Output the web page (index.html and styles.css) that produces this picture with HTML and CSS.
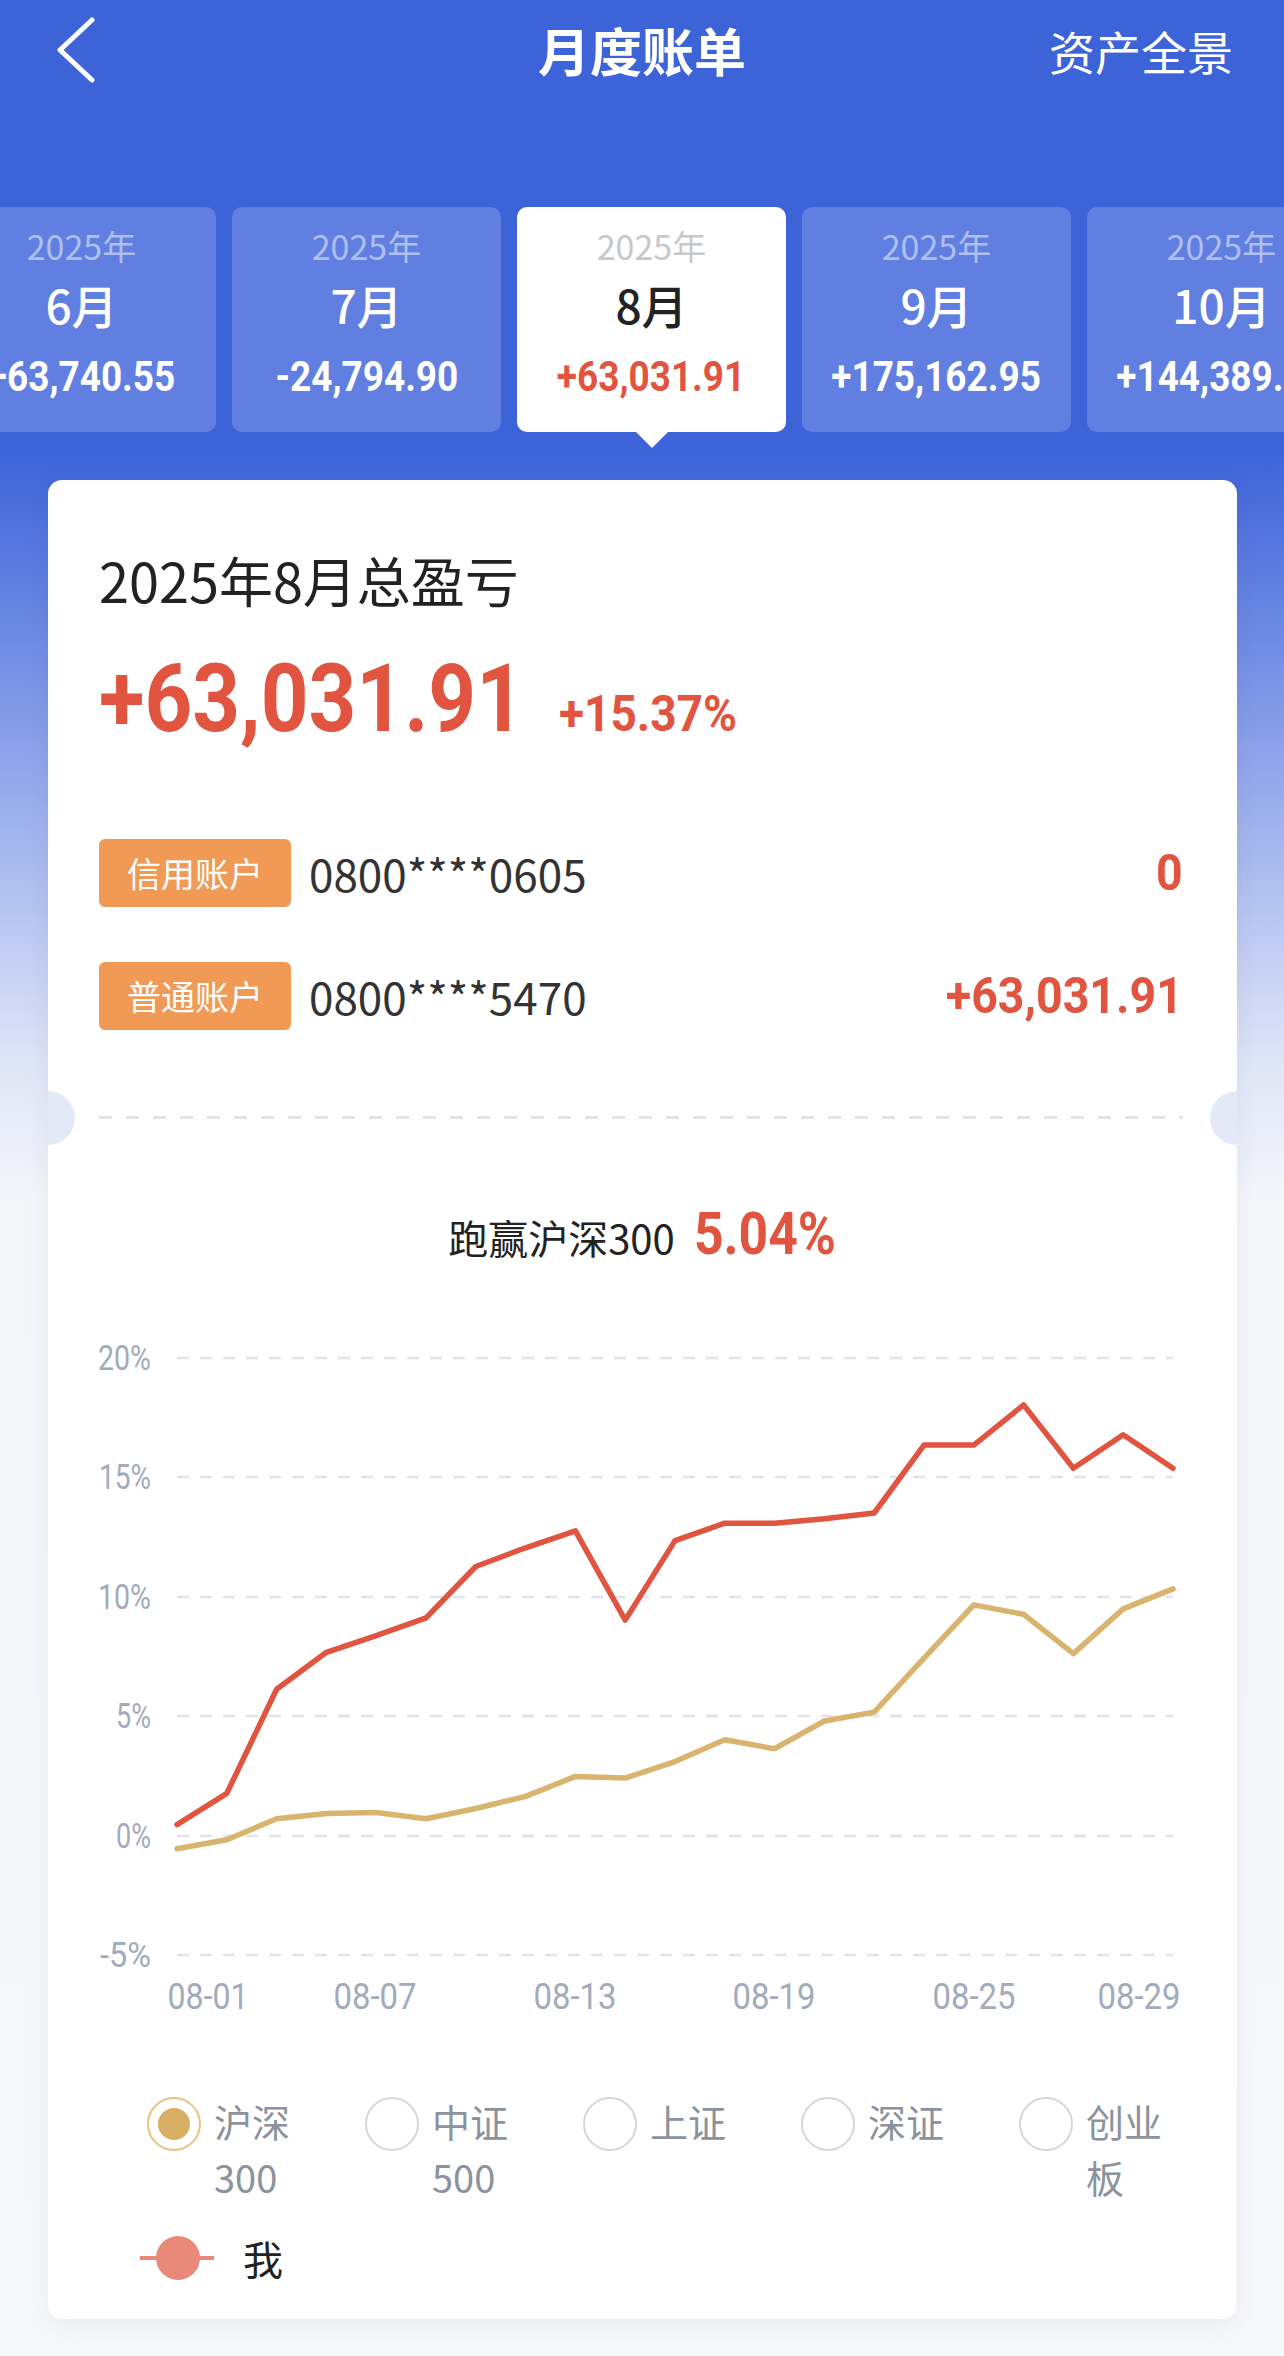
FILE: index.html
```html
<!DOCTYPE html>
<html lang="zh-CN">
<head>
<meta charset="utf-8">
<title>月度账单</title>
<link rel="stylesheet" href="styles.css">
</head>
<body>
<div class="page">
  <header class="topbar">
    <div class="tb-left">
      <svg class="back" width="42" height="66" viewBox="0 0 42 66"><path d="M37 3 L5 33 L37 63" fill="none" stroke="#fff" stroke-width="5" stroke-linecap="round" stroke-linejoin="round"/></svg>
    </div>
    <div class="tb-title">月度账单</div>
    <div class="tb-right">资产全景</div>
  </header>

  <div class="months">
    <div class="month"><div class="m-year">2025年</div><div class="m-name">6月</div><div class="m-amt"><span class="cond">+63,740.55</span></div></div>
    <div class="month"><div class="m-year">2025年</div><div class="m-name">7月</div><div class="m-amt"><span class="cond">-24,794.90</span></div></div>
    <div class="month active"><div class="m-year">2025年</div><div class="m-name">8月</div><div class="m-amt"><span class="cond">+63,031.91</span></div></div>
    <div class="month"><div class="m-year">2025年</div><div class="m-name">9月</div><div class="m-amt"><span class="cond">+175,162.95</span></div></div>
    <div class="month"><div class="m-year">2025年</div><div class="m-name">10月</div><div class="m-amt"><span class="cond">+144,389.12</span></div></div>
  </div>

  <section class="card">
    <div class="summary">
      <div class="s-title">2025年8月总盈亏</div>
      <div class="s-total"><span class="big">+63,031.91</span><span class="pct">+15.37%</span></div>
      <div class="acct first">
        <span class="badge">信用账户</span>
        <span class="acct-no">0800****0605</span>
        <span class="acct-val">0</span>
      </div>
      <div class="acct">
        <span class="badge">普通账户</span>
        <span class="acct-no">0800****5470</span>
        <span class="acct-val">+63,031.91</span>
      </div>
    </div>

    <div class="sep"><div class="dash"></div></div>

    <div class="vs"><span class="vs-label">跑赢沪深300</span><span class="vs-val">5.04%</span></div>

    <svg class="chart" width="1189" height="700" viewBox="48 1330 1189 700">
      <g class="grid" stroke="#e2e4ea" stroke-width="2.5" stroke-dasharray="12 11">
        <line x1="177" y1="1357" x2="1173" y2="1357"/>
        <line x1="177" y1="1476" x2="1173" y2="1476"/>
        <line x1="177" y1="1596" x2="1173" y2="1596"/>
        <line x1="177" y1="1715" x2="1173" y2="1715"/>
        <line x1="177" y1="1835" x2="1173" y2="1835"/>
        <line x1="177" y1="1954" x2="1173" y2="1954"/>
      </g>
      <g class="ylab" text-anchor="end">
        <text x="151" y="1369" textLength="53" lengthAdjust="spacingAndGlyphs">20%</text>
        <text x="151" y="1488" textLength="52" lengthAdjust="spacingAndGlyphs">15%</text>
        <text x="151" y="1608" textLength="53" lengthAdjust="spacingAndGlyphs">10%</text>
        <text x="151" y="1727" textLength="35" lengthAdjust="spacingAndGlyphs">5%</text>
        <text x="151" y="1847" textLength="35" lengthAdjust="spacingAndGlyphs">0%</text>
        <text x="151" y="1966" textLength="51" lengthAdjust="spacingAndGlyphs">-5%</text>
      </g>
      <g class="xlab" text-anchor="middle">
        <text x="208" y="2008" textLength="81" lengthAdjust="spacingAndGlyphs">08-01</text>
        <text x="375" y="2008" textLength="83" lengthAdjust="spacingAndGlyphs">08-07</text>
        <text x="575" y="2008" textLength="83" lengthAdjust="spacingAndGlyphs">08-13</text>
        <text x="774" y="2008" textLength="83" lengthAdjust="spacingAndGlyphs">08-19</text>
        <text x="974" y="2008" textLength="83" lengthAdjust="spacingAndGlyphs">08-25</text>
        <text x="1139" y="2008" textLength="83" lengthAdjust="spacingAndGlyphs">08-29</text>
      </g>
      <polyline fill="none" stroke="#d9b46e" stroke-width="5.5" stroke-linejoin="round" stroke-linecap="round"
        points="177,1847.7 226.8,1838.8 276.6,1817.8 326.4,1812.4 376.2,1811.5 426,1817.8 475.8,1807.5 525.6,1795.4 575.4,1775.4 625.2,1777.1 675,1760.6 724.8,1738.8 774.6,1747.7 824.4,1720 874.2,1711.1 924,1657.1 973.8,1603.9 1023.6,1613.3 1073.4,1652.6 1123.2,1607.9 1173,1587.9"/>
      <polyline fill="none" stroke="#e05440" stroke-width="5.5" stroke-linejoin="round" stroke-linecap="round"
        points="177,1823.6 226.8,1792.3 276.6,1688.3 326.4,1651.3 376.2,1634.7 426,1616.9 475.8,1565.5 525.6,1546.8 575.4,1529.8 625.2,1619.1 675,1539.6 724.8,1522.2 774.6,1522.2 824.4,1517.8 874.2,1512 924,1444.1 973.8,1444.1 1023.6,1403.9 1073.4,1467.3 1123.2,1433.8 1173,1467.3"/>
    </svg>

    <div class="legend">
      <div class="lg-item"><span class="radio on"></span><span class="lg-text">沪深<br>300</span></div>
      <div class="lg-item"><span class="radio"></span><span class="lg-text">中证<br>500</span></div>
      <div class="lg-item"><span class="radio"></span><span class="lg-text">上证</span></div>
      <div class="lg-item"><span class="radio"></span><span class="lg-text">深证</span></div>
      <div class="lg-item"><span class="radio"></span><span class="lg-text">创业<br>板</span></div>
    </div>
    <div class="me">
      <svg width="74" height="46" viewBox="0 0 74 46"><line x1="0" y1="23" x2="74" y2="23" stroke="#e8897a" stroke-width="4"/><circle cx="38" cy="23" r="22" fill="#e8897a"/></svg>
      <span class="me-text">我</span>
    </div>
  </section>
</div>
</body>
</html>
```

FILE: styles.css
```css
html, body {
  margin: 0;
  padding: 0;
}
body {
  width: 1284px;
  min-height: 2356px;
  overflow: hidden;
  background: linear-gradient(180deg, #3d63d9 0px, #3d63d9 450px, #8fa4ea 760px, #dfe5f7 1060px, #f5f6fa 1200px, #f7f8fa 100%);
  font-family: "Noto Sans CJK SC", "Noto Sans", sans-serif;
  color: #222;
}
.page {
  width: 1284px;
}

/* top bar */
.topbar {
  height: 100px;
  display: grid;
  grid-template-columns: 1fr auto 1fr;
  align-items: center;
  color: #fff;
}
.tb-left {
  padding-left: 55px;
  display: flex;
  align-items: center;
}
.back {
  display: block;
}
.tb-title {
  font-size: 52px;
  font-weight: 700;
  line-height: 100px;
}
.tb-right {
  text-align: right;
  padding-right: 51px;
  font-size: 46px;
  line-height: 100px;
}

/* month strip */
.months {
  display: flex;
  gap: 16px;
  margin-top: 107px;
  margin-left: -53px;
}
.month {
  flex: 0 0 269px;
  height: 225px;
  border-radius: 10px;
  background: rgba(255, 255, 255, 0.18);
  display: flex;
  flex-direction: column;
  align-items: center;
  position: relative;
  color: #fff;
}
.m-year {
  margin-top: 19px;
  font-size: 34px;
  line-height: 40px;
  color: rgba(255, 255, 255, 0.5);
}
.m-name {
  margin-top: 10px;
  font-size: 46px;
  line-height: 56px;
  font-weight: 500;
}
.m-amt {
  margin-top: 22px;
  font-family: "Roboto", "Liberation Sans", sans-serif;
  font-weight: 700;
  font-size: 42px;
  line-height: 46px;
  white-space: nowrap;
}
.m-amt .cond {
  display: inline-block;
  transform: scaleX(0.88);
  transform-origin: center;
}
.month.active {
  background: #fff;
}
.month.active .m-year {
  color: #c8c8c8;
}
.month.active .m-name {
  color: #222;
}
.month.active .m-amt {
  color: #e05440;
}
.month.active::after {
  content: "";
  position: absolute;
  left: 50%;
  bottom: -16px;
  transform: translateX(-50%);
  border-left: 16px solid transparent;
  border-right: 16px solid transparent;
  border-top: 16px solid #fff;
}

/* main card */
.card {
  margin: 48px 47px 0 48px;
  background: #fff;
  border-radius: 14px;
  overflow: hidden;
  box-shadow: 0 6px 24px rgba(40, 60, 100, 0.07);
  padding-bottom: 33px;
}
.summary {
  padding: 70px 54px 0 51px;
}
.s-title {
  font-size: 54px;
  line-height: 60px;
  color: #222;
}
.s-total {
  margin-top: 39px;
  height: 100px;
  line-height: 100px;
  font-family: "Roboto", "Liberation Sans", sans-serif;
  font-weight: 700;
  color: #e05440;
  white-space: nowrap;
}
.big {
  display: inline-block;
  font-size: 94px;
  transform: scaleX(0.887);
  transform-origin: left center;
  margin-right: -53px;
}
.pct {
  display: inline-block;
  margin-left: 34px;
  font-size: 50px;
  transform: scaleX(0.92);
  transform-origin: left center;
}
.acct {
  display: flex;
  align-items: center;
  height: 68px;
  margin-top: 55px;
}
.acct.first {
  margin-top: 90px;
}
.badge {
  flex: 0 0 192px;
  height: 68px;
  line-height: 68px;
  text-align: center;
  background: #f09a56;
  border-radius: 6px;
  color: #fff;
  font-size: 34px;
}
.acct-no {
  margin-left: 18px;
  font-size: 44px;
  color: #333;
}
.acct-val {
  display: inline-block;
  margin-left: auto;
  font-family: "Roboto", "Liberation Sans", sans-serif;
  font-weight: 700;
  font-size: 50px;
  color: #e05440;
  transform: scaleX(0.93);
  transform-origin: right center;
}

/* separator */
.sep {
  position: relative;
  margin-top: 86px;
  padding: 0 54px 0 51px;
}
.sep::before,
.sep::after {
  content: "";
  position: absolute;
  top: 50%;
  width: 54px;
  height: 54px;
  margin-top: -27px;
  border-radius: 50%;
  background: #e4e9f7;
}
.sep::before {
  left: -27px;
}
.sep::after {
  right: -27px;
}
.dash {
  height: 3px;
  background: repeating-linear-gradient(90deg, #e3e3e3 0 13px, transparent 13px 27px);
}

/* versus */
.vs {
  margin-top: 80px;
  text-align: center;
  line-height: 70px;
  white-space: nowrap;
}
.vs-label {
  font-size: 40px;
  color: #222;
}
.vs-val {
  display: inline-block;
  margin-left: 19px;
  margin-right: -22px;
  font-family: "Roboto", "Liberation Sans", sans-serif;
  font-weight: 700;
  font-size: 60px;
  color: #e05440;
  transform: scaleX(0.86);
  transform-origin: left center;
}

/* chart */
.chart {
  display: block;
  margin-top: 49px;
}
.ylab text {
  font-family: "Roboto", "Liberation Sans", sans-serif;
  font-size: 35px;
  fill: #a3abba;
}
.xlab text {
  font-family: "Roboto", "Liberation Sans", sans-serif;
  font-size: 36px;
  fill: #a3abba;
}

/* legend */
.legend {
  display: flex;
  margin-top: 62px;
  padding-left: 99px;
}
.lg-item {
  flex: 0 0 218px;
  display: flex;
  align-items: flex-start;
}
.radio {
  flex: 0 0 54px;
  height: 54px;
  box-sizing: border-box;
  margin-top: 4px;
  border: 2px solid #d6d6d6;
  border-radius: 50%;
  position: relative;
}
.radio.on {
  border-color: #e8c27f;
}
.radio.on::after {
  content: "";
  position: absolute;
  left: 50%;
  top: 50%;
  width: 32px;
  height: 32px;
  margin: -16px 0 0 -16px;
  border-radius: 50%;
  background: #d9af63;
}
.lg-text {
  margin-left: 13px;
  font-size: 38px;
  line-height: 56px;
  color: #8b929d;
}
.me {
  display: flex;
  align-items: center;
  margin-top: 25px;
  padding-left: 92px;
  height: 56px;
}
.me svg {
  display: block;
}
.me-text {
  margin-left: 29px;
  font-size: 40px;
  color: #222;
}
```
